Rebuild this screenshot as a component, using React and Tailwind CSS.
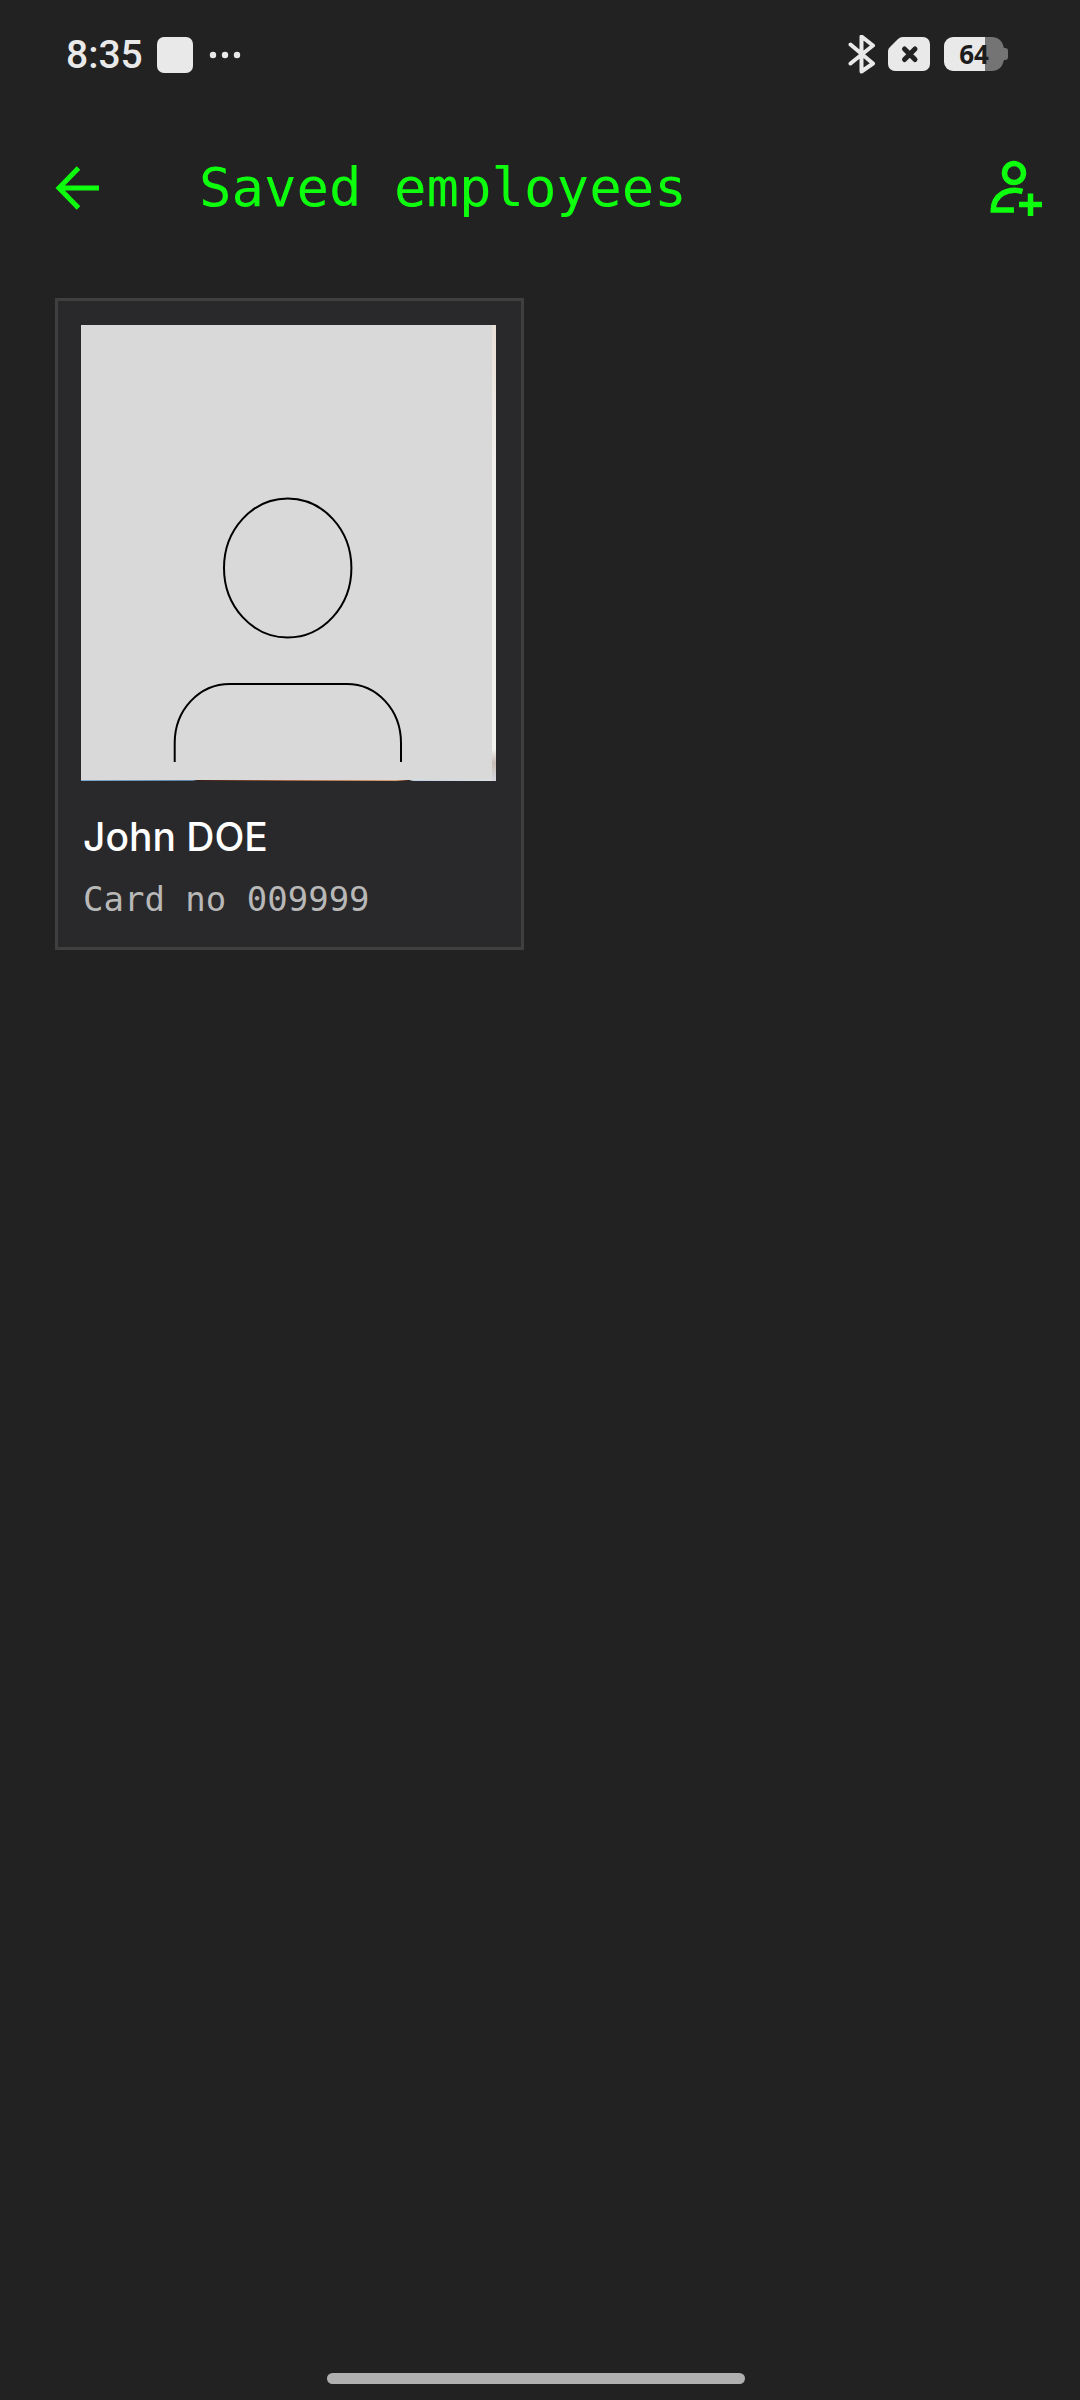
function BluetoothIcon() {
  return (
    <svg className="h-10 w-7" viewBox="0 0 28 40" fill="none" stroke="#e9e9e9" strokeWidth="4" strokeLinejoin="round" strokeLinecap="round" aria-hidden="true">
      <path d="M2.5 9.500 25 28.500 13.500 36.500V1.500L25 10.500 2.500 28.500" />
    </svg>
  )
}

function NoSimIcon() {
  return (
    <svg className="h-9 w-[42px]" viewBox="0 0 42 36" aria-hidden="true">
      <path d="M15 0H35a7 7 0 0 1 7 7V27a7 7 0 0 1-7 7H7a7 7 0 0 1-7-7V14a6 6 0 0 1 2-4L10 2a7 7 0 0 1 5-2Z" fill="#e9e9e9" />
      <path d="M16.500 12 27 22.500M27 12 16.500 22.500" stroke="#222" strokeWidth="5" strokeLinecap="round" />
    </svg>
  )
}

function Battery({ level }) {
  return (
    <div className="relative h-9 w-16">
      <svg className="h-9 w-16" viewBox="0 0 64 36" aria-hidden="true">
        <path d="M41 0H48c6 0 10 4 11 8l1 3h1a3 3 0 0 1 3 3V20a3 3 0 0 1-3 3h-1l-1 3c-1 4-5 8-11 8H41Z" fill="#747474" />
        <path d="M9 0H41V34H9a9 9 0 0 1-9-9V9a9 9 0 0 1 9-9Z" fill="#e9e9e9" />
      </svg>
      <span className="absolute inset-0 pr-1 text-center font-['Noto_Sans'] text-[26px] leading-[34px] font-bold text-[#1c1c1c]">
        {level}
      </span>
    </div>
  )
}

function StatusBar() {
  return (
    <div className="flex h-[110px] items-center justify-between pr-[72px] pl-[66px]">
      <div className="flex items-center">
        <span className="font-[Roboto] text-[39px] leading-none font-medium text-[#e9e9e9]">8:35</span>
        <span className="ml-3.5 h-9 w-9 rounded-[7px] bg-[#e9e9e9]" />
        <svg className="ml-4 h-2 w-8" viewBox="0 0 32 8" fill="#e9e9e9" aria-hidden="true">
          <circle cx="4" cy="4" r="3.200" />
          <circle cx="16" cy="4" r="3.200" />
          <circle cx="28" cy="4" r="3.200" />
        </svg>
      </div>
      <div className="flex items-center">
        <BluetoothIcon />
        <span className="ml-3 flex">
          <NoSimIcon />
        </span>
        <span className="ml-3.5 flex">
          <Battery level={64} />
        </span>
      </div>
    </div>
  )
}

function Header() {
  return (
    <header className="flex h-[156px] items-center pr-8 pl-[53px] text-[#0dff0d]">
      <button type="button" aria-label="Back" className="shrink-0">
        <svg className="h-12 w-12" viewBox="0 0 48 48" fill="none" stroke="currentColor" strokeWidth="5">
          <path d="M46 24H6M25.500 4 6 24l19.500 20" />
        </svg>
      </button>
      <h1 className="ml-[98px] grow font-['DejaVu_Sans_Mono',monospace] text-[54px] leading-none whitespace-nowrap">
        Saved employees
      </h1>
      <button type="button" aria-label="Add employee" className="shrink-0">
        <svg className="h-16 w-16" viewBox="0 0 64 64" fill="none" stroke="currentColor" strokeWidth="5.500">
          <circle cx="30" cy="17" r="9.500" />
          <path d="M38.500 35.500C24 31 9.500 39 9.300 54H30M46.500 37.500V60M35 48.500H58" />
        </svg>
      </button>
    </header>
  )
}

function PhotoPlaceholder() {
  return (
    <svg className="block h-auto w-full" viewBox="0 0 415 456" role="img" aria-label="Employee photo">
      <defs>
        <linearGradient id="photo-bottom">
          <stop offset="0" stopColor="#7fa9cf" />
          <stop offset="0.270" stopColor="#5d7f9f" />
          <stop offset="0.280" stopColor="#3a1c12" />
          <stop offset="0.500" stopColor="#a8674a" />
          <stop offset="0.760" stopColor="#d9a078" />
          <stop offset="0.790" stopColor="#2a1410" />
          <stop offset="0.800" stopColor="#b9cfe6" />
          <stop offset="1" stopColor="#dfe3e8" />
        </linearGradient>
        <linearGradient id="photo-side" x2="0" y2="1">
          <stop offset="0" stopColor="#eadfd6" />
          <stop offset="0.300" stopColor="#f0efeb" />
          <stop offset="0.930" stopColor="#f1f2f0" />
          <stop offset="0.960" stopColor="#c9bdb6" />
          <stop offset="1" stopColor="#d5d7de" />
        </linearGradient>
      </defs>
      <rect width="415" height="456" fill="url(#photo-bottom)" />
      <rect x="411" width="4" height="456" fill="url(#photo-side)" />
      <rect width="411" height="455" fill="#d9d9d9" />
      <g fill="none" stroke="#000" strokeWidth="2">
        <ellipse cx="206.700" cy="243" rx="63.700" ry="69.500" />
        <path d="M93.700 437V418C93.700 385 118 359 149 359H265.700C296 359 320 385 320 418V437" />
      </g>
    </svg>
  )
}

const employees = [{ id: 1, name: "John DOE", cardNo: "009999" }]

export default function App() {
  return (
    <div className="flex min-h-screen flex-col bg-[#222222]">
      <StatusBar />
      <Header />
      <main className="grid grow grid-cols-2 content-start gap-8 px-[55px] pt-8">
        {employees.map((employee) => (
          <article key={employee.id} className="border-3 border-[#3f3f3f] bg-[#29292b] py-6 pr-[25px] pl-[23px]">
            <PhotoPlaceholder />
            <div className="pt-8 pl-0.5">
              <h2 className="font-[Inter] text-[39px] leading-12 font-medium text-white">{employee.name}</h2>
              <p className="mt-3.5 font-['DejaVu_Sans_Mono',monospace] text-[34px] leading-12 text-[#b8b8b8]">
                Card no {employee.cardNo}
              </p>
            </div>
          </article>
        ))}
      </main>
      <div className="flex justify-center pr-2 pb-4">
        <div className="h-[11px] w-[418px] rounded-full bg-[#b0b0b0]" />
      </div>
    </div>
  )
}
